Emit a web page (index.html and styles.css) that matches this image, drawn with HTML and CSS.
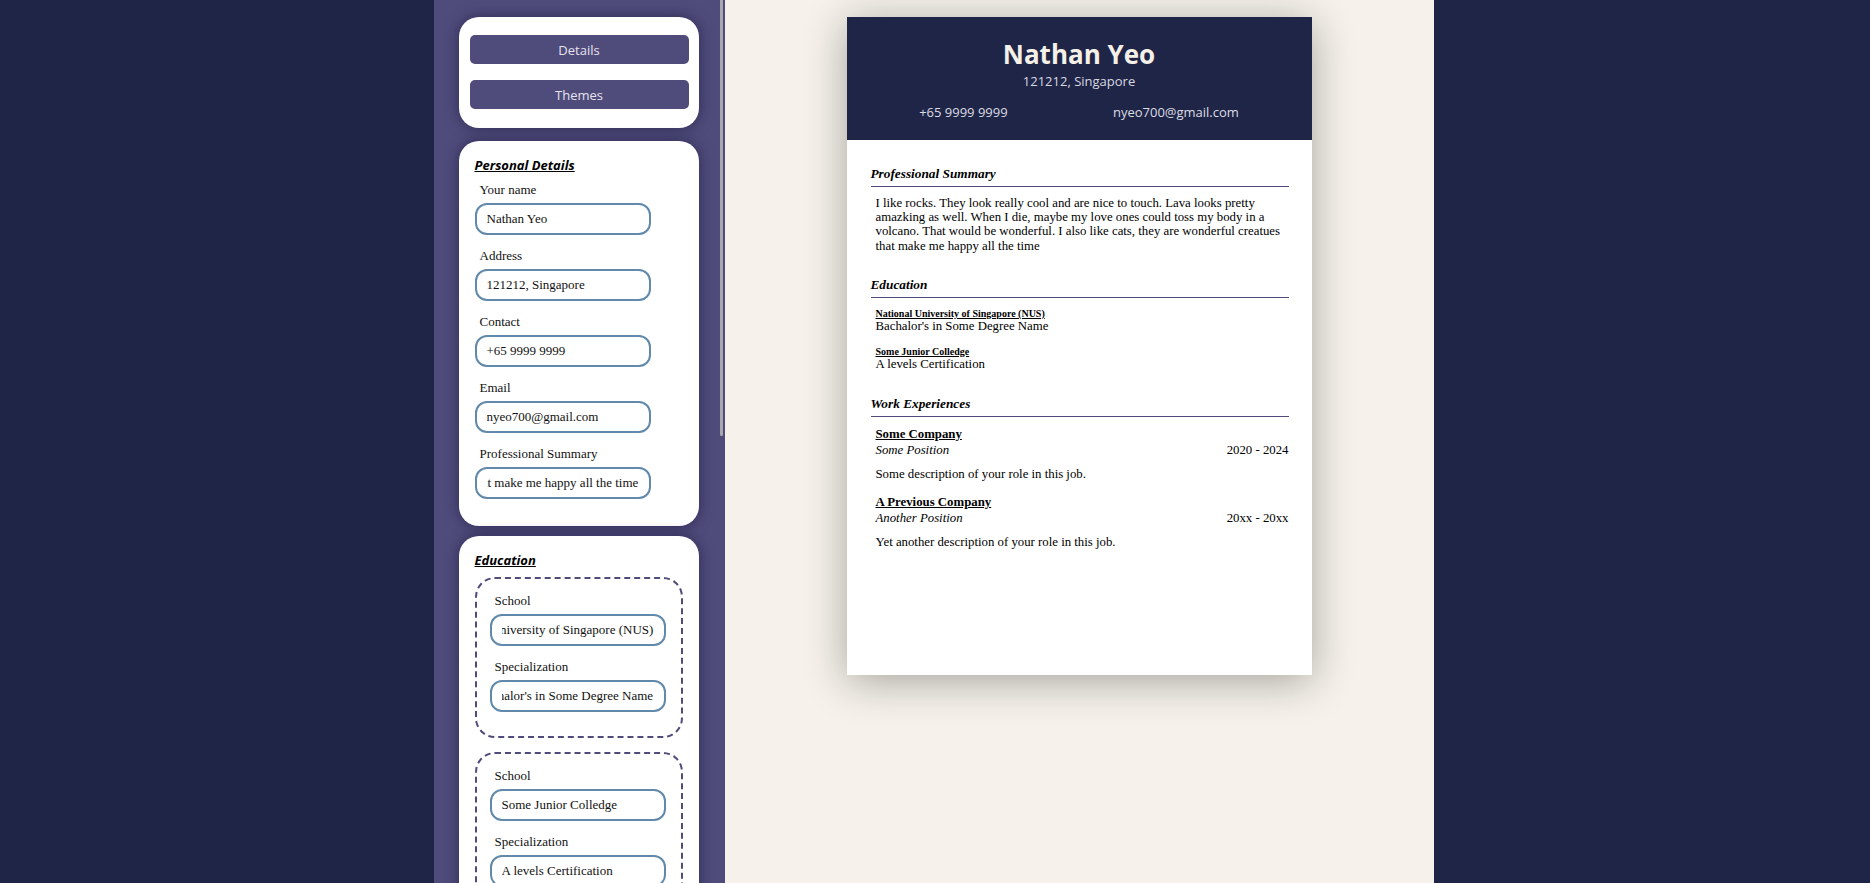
FILE: index.html
```html
<!DOCTYPE html>
<html lang="en">
<head>
<meta charset="utf-8">
<title>CV Builder</title>
<link rel="stylesheet" href="styles.css">
</head>
<body>
<div class="app">
  <div class="sidebar-wrap">
    <aside class="sidebar">
      <section class="card nav-card">
        <button class="btn" type="button">Details</button>
        <button class="btn" type="button">Themes</button>
      </section>

      <section class="card form-card">
        <h2 class="card-title">Personal Details</h2>
        <div class="fields">
          <div class="field"><label>Your name</label><input class="input" value="Nathan Yeo"></div>
          <div class="field"><label>Address</label><input class="input" value="121212, Singapore"></div>
          <div class="field"><label>Contact</label><input class="input" value="+65 9999 9999"></div>
          <div class="field"><label>Email</label><input class="input" value="nyeo700@gmail.com"></div>
          <div class="field"><label>Professional Summary</label><input class="input scroll-end" value="I like rocks. They look really cool and are nice to touch. Lava looks pretty amazking as well. When I die, maybe my love ones could toss my body in a volcano. That would be wonderful. I also like cats, they are wonderful creatues that make me happy all the time"></div>
        </div>
      </section>

      <section class="card form-card">
        <h2 class="card-title">Education</h2>
        <div class="entries">
          <div class="entry-box fields">
            <div class="field"><label>School</label><input class="input scroll-end" value="National University of Singapore (NUS)"></div>
            <div class="field"><label>Specialization</label><input class="input scroll-end" value="Bachalor's in Some Degree Name"></div>
          </div>
          <div class="entry-box fields">
            <div class="field"><label>School</label><input class="input" value="Some Junior Colledge"></div>
            <div class="field"><label>Specialization</label><input class="input" value="A levels Certification"></div>
          </div>
        </div>
        <button class="btn add-btn" type="button">Add Education</button>
      </section>

      <section class="card form-card">
        <h2 class="card-title">Work Experiences</h2>
        <div class="entries">
          <div class="entry-box fields">
            <div class="field"><label>Company</label><input class="input" value="Some Company"></div>
            <div class="field"><label>Position</label><input class="input" value="Some Position"></div>
            <div class="field"><label>Duration</label><input class="input" value="2020 - 2024"></div>
            <div class="field"><label>Description</label><textarea class="input area">Some description of your role in this job.</textarea></div>
          </div>
          <div class="entry-box fields">
            <div class="field"><label>Company</label><input class="input" value="A Previous Company"></div>
            <div class="field"><label>Position</label><input class="input" value="Another Position"></div>
            <div class="field"><label>Duration</label><input class="input" value="20xx - 20xx"></div>
            <div class="field"><label>Description</label><textarea class="input area">Yet another description of your role in this job.</textarea></div>
          </div>
        </div>
        <button class="btn add-btn" type="button">Add Work Experience</button>
      </section>
    </aside>
    <div class="scroll-thumb" aria-hidden="true"></div>
  </div>

  <main class="main">
    <article class="paper">
      <header class="res-header">
        <h1 class="res-name">Nathan Yeo</h1>
        <div class="res-address">121212, Singapore</div>
        <div class="res-contacts">
          <span>+65 9999 9999</span>
          <span>nyeo700@gmail.com</span>
        </div>
      </header>
      <div class="res-body">
        <section class="res-section">
          <h2 class="res-heading">Professional Summary</h2>
          <p class="res-summary">I like rocks. They look really cool and are nice to touch. Lava looks pretty amazking as well. When I die, maybe my love ones could toss my body in a volcano. That would be wonderful. I also like cats, they are wonderful creatues that make me happy all the time</p>
        </section>
        <section class="res-section">
          <h2 class="res-heading">Education</h2>
          <div class="edu-list">
            <div class="edu">
              <div class="edu-school">National University of Singapore (NUS)</div>
              <div class="edu-spec">Bachalor's in Some Degree Name</div>
            </div>
            <div class="edu">
              <div class="edu-school">Some Junior Colledge</div>
              <div class="edu-spec">A levels Certification</div>
            </div>
          </div>
        </section>
        <section class="res-section work-section">
          <h2 class="res-heading">Work Experiences</h2>
          <div class="job-list">
            <div class="job">
              <div class="job-company">Some Company</div>
              <div class="job-row"><span class="job-position">Some Position</span><span>2020 - 2024</span></div>
              <p class="job-desc">Some description of your role in this job.</p>
            </div>
            <div class="job">
              <div class="job-company">A Previous Company</div>
              <div class="job-row"><span class="job-position">Another Position</span><span>20xx - 20xx</span></div>
              <p class="job-desc">Yet another description of your role in this job.</p>
            </div>
          </div>
        </section>
      </div>
    </article>
  </main>
</div>
<script src="script.js"></script>
</body>
</html>
```

FILE: styles.css
```css
* { box-sizing: border-box; }

html, body { height: 100%; }

body {
  margin: 0;
  padding-right: 3px;
  background: #1f2546;
  font-family: "Open Sans", "Noto Sans", sans-serif;
  overflow: hidden;
}

.app {
  width: 1000px;
  height: 100vh;
  margin: 0 auto;
  display: grid;
  grid-template-columns: 291px 1fr;
}

/* ---------- sidebar ---------- */
.sidebar-wrap {
  position: relative;
  min-height: 0;
  background: #4f4b7b;
}

.sidebar {
  height: 100%;
  overflow-y: scroll;
  scrollbar-width: none;
  padding: 17px 0 17px 25px;
  display: flex;
  flex-direction: column;
  align-items: flex-start;
}

.sidebar::-webkit-scrollbar { display: none; }

.scroll-thumb {
  position: absolute;
  top: 0;
  right: 2px;
  width: 3px;
  height: 436px;
  border-radius: 0 0 2px 2px;
  background: #a8a7ad;
}

.card {
  width: 240px;
  flex: none;
  background: #ffffff;
  border-radius: 20px;
  box-shadow: 0 0 14px rgba(22, 20, 52, 0.55);
}

.nav-card {
  padding: 18px 10px 19px 11px;
  display: flex;
  flex-direction: column;
  gap: 16px;
  margin-bottom: 13px;
}

.btn {
  display: block;
  width: 219px;
  height: 29px;
  border: none;
  border-radius: 5px;
  background: #4f4b7b;
  color: #e6e2ee;
  font-family: "Open Sans", sans-serif;
  font-size: 13px;
  cursor: pointer;
}

.form-card {
  padding: 15px 16px 27px;
  margin-bottom: 10px;
}

.card-title {
  margin: 0 0 8px;
  font-family: "Open Sans", sans-serif;
  font-size: 13px;
  font-weight: 700;
  font-style: italic;
  text-decoration: underline;
  color: #000;
  line-height: 18px;
}

.fields {
  display: flex;
  flex-direction: column;
  gap: 13px;
}

.field {
  display: flex;
  flex-direction: column;
}

.field label {
  font-family: "Liberation Serif", serif;
  font-size: 13px;
  line-height: 15px;
  padding-left: 5px;
  margin-bottom: 6px;
  color: #111;
}

.input {
  width: 176px;
  height: 32px;
  border: 2px solid #6189ab;
  border-radius: 12px;
  padding: 0 10px;
  font-family: "Liberation Serif", serif;
  font-size: 13px;
  color: #111;
  background: #fff;
  outline: none;
}

.area {
  height: 65px;
  padding: 7px 10px;
  resize: none;
  overflow: hidden;
  line-height: 15px;
}

.entries {
  display: flex;
  flex-direction: column;
  gap: 14px;
}

.entry-box {
  border: 2px dashed #4f4b7b;
  border-radius: 20px;
  padding: 14px 14px 24px 13px;
}

.add-btn {
  width: 208px;
  margin-top: 16px;
}

/* ---------- main / resume ---------- */
.main {
  background: #f6f2eb;
  padding-top: 17px;
  display: flex;
  justify-content: center;
  align-items: flex-start;
  overflow: hidden;
}

.paper {
  width: 465px;
  height: 658px;
  background: #ffffff;
  box-shadow: 0 6px 40px rgba(0, 0, 0, 0.33);
  display: flex;
  flex-direction: column;
}

.res-header {
  background: #1f2547;
  padding: 20px 20px 19px;
  text-align: center;
}

.res-name {
  margin: 0;
  font-family: "Open Sans", sans-serif;
  font-size: 26px;
  font-weight: 700;
  line-height: 35px;
  color: #f5f0e8;
}

.res-address {
  font-size: 13px;
  line-height: 18px;
  color: #d8d8e0;
}

.res-contacts {
  margin-top: 13px;
  display: flex;
  justify-content: space-around;
  font-size: 13px;
  line-height: 18px;
  color: #dcdce3;
}

.res-body {
  padding: 26px 23px 0 24px;
  font-family: "Liberation Serif", "Times New Roman", serif;
  color: #000;
}

.res-section + .res-section { margin-top: 24px; }
.res-section.work-section { margin-top: 25px; }

.res-heading {
  margin: 0;
  font-size: 13.3px;
  font-style: italic;
  font-weight: 700;
  line-height: 15px;
  padding-bottom: 5px;
  border-bottom: 1px solid #4f4b7b;
}

.res-summary {
  margin: 9px 0 0;
  padding-left: 5px;
  font-size: 12.8px;
  line-height: 14.2px;
}

.edu-list {
  margin-top: 10px;
  padding-left: 5px;
  display: flex;
  flex-direction: column;
  gap: 12px;
}

.edu-school {
  font-size: 10px;
  font-weight: 700;
  text-decoration: underline;
  line-height: 11.5px;
}

.edu-spec {
  font-size: 12.8px;
  line-height: 14.2px;
}

.job-list {
  margin-top: 9px;
  padding-left: 5px;
  display: flex;
  flex-direction: column;
  gap: 13px;
}

.job-company {
  font-size: 12.8px;
  font-weight: 700;
  text-decoration: underline;
  line-height: 16px;
}

.job-row {
  display: flex;
  justify-content: space-between;
  font-size: 12.8px;
  line-height: 16px;
}

.job-position { font-style: italic; }

.job-desc {
  margin: 9px 0 0;
  font-size: 12.8px;
  line-height: 14.2px;
}
```

FILE: script.js
```js
function scrollInputsToEnd() {
  document.querySelectorAll('.scroll-end').forEach(function (el) {
    el.scrollLeft = el.scrollWidth;
  });
}
scrollInputsToEnd();
window.addEventListener('load', scrollInputsToEnd);
if (document.fonts && document.fonts.ready) {
  document.fonts.ready.then(scrollInputsToEnd);
}
```
